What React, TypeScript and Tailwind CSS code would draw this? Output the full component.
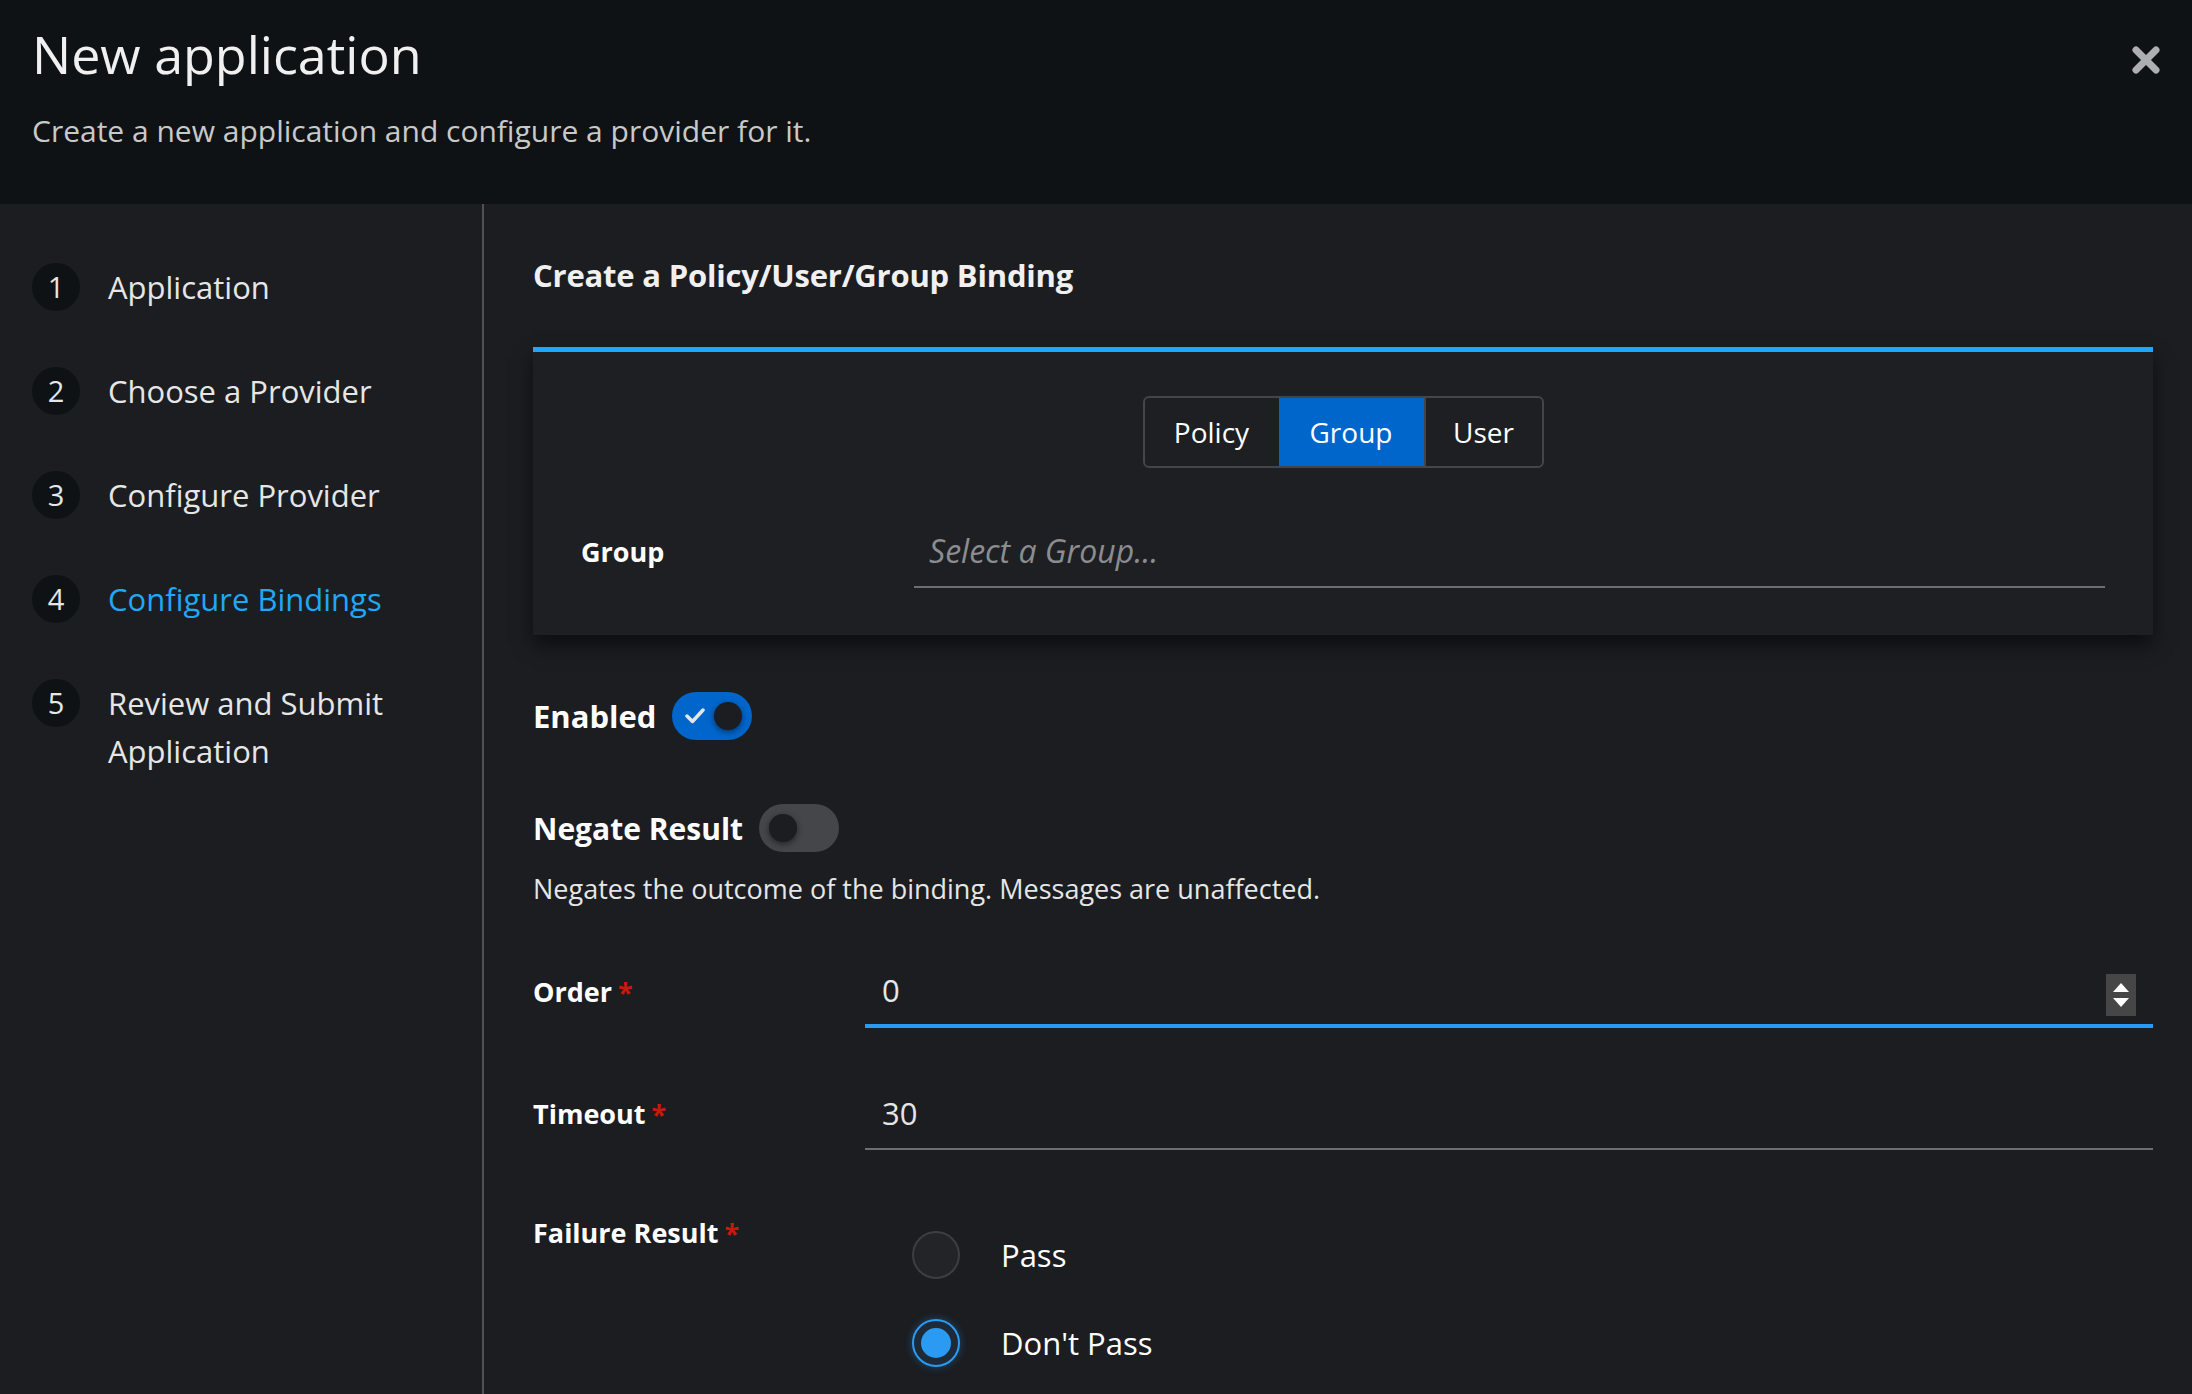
import React from "react";

function CloseIcon() {
  return (
    <svg width="30" height="30" viewBox="0 0 30 30">
      <line x1="5" y1="5" x2="25" y2="25" stroke="#aeafb1" strokeWidth="7" strokeLinecap="round" />
      <line x1="25" y1="5" x2="5" y2="25" stroke="#aeafb1" strokeWidth="7" strokeLinecap="round" />
    </svg>
  );
}

function Step({ n, label, active }: { n: number; label: string; active?: boolean }) {
  return (
    <div className="flex items-start gap-[28px]">
      <div className="w-[48px] h-[48px] shrink-0 rounded-full bg-[#0f1214] flex items-center justify-center text-[29px] text-[#e6e6e6]">
        {n}
      </div>
      <div
        className={
          "max-w-[300px] text-[31px] leading-[48px] " + (active ? "text-[#1fa7f8]" : "text-[#e6e6e6]")
        }
      >
        {label}
      </div>
    </div>
  );
}

function Switch({ on }: { on: boolean }) {
  return (
    <div
      className={
        "relative w-[80px] h-[48px] rounded-full shrink-0 " + (on ? "bg-[#0066cc]" : "bg-[#45464a]")
      }
    >
      {on && (
        <svg className="absolute left-[13px] top-[15px]" width="20" height="18" viewBox="0 0 20 18">
          <path d="M2 9 L7.5 14.5 L18 3" fill="none" stroke="#e6e6e6" strokeWidth="3.5" strokeLinecap="round" strokeLinejoin="round" />
        </svg>
      )}
      <div
        className={
          "absolute top-[10px] w-[28px] h-[28px] rounded-full bg-[#1b1d21] shadow-[0_2px_6px_rgba(0,0,0,0.5)] " +
          (on ? "left-[42px]" : "left-[10px]")
        }
      />
    </div>
  );
}

function Req() {
  return <span className="ml-[6px] text-[#c9190b]">*</span>;
}

export default function App() {
  return (
    <div className="h-[1394px] w-full overflow-hidden flex flex-col bg-[#1b1d21] font-['Open_Sans',sans-serif]">
      <header className="relative h-[204px] shrink-0 bg-[#0f1214] px-[32px] pt-[18px]">
        <h1 className="text-[52px] leading-[72px] font-normal text-[#f0f0f0]">New application</h1>
        <p className="mt-[17px] text-[30px] leading-[48px] text-[#c9c9c9]">
          Create a new application and configure a provider for it.
        </p>
        <button className="absolute right-[31px] top-[45px]">
          <CloseIcon />
        </button>
      </header>
      <div className="flex flex-1 min-h-0">
        <nav className="w-[484px] shrink-0 border-r-2 border-[#4f5255] pt-[59px] pl-[32px] flex flex-col gap-[56px]">
          <Step n={1} label="Application" />
          <Step n={2} label="Choose a Provider" />
          <Step n={3} label="Configure Provider" />
          <Step n={4} label="Configure Bindings" active />
          <Step n={5} label="Review and Submit Application" />
        </nav>
        <main className="flex-1 min-w-0 pl-[49px] pr-[39px] pt-[47px]">
          <h2 className="text-[31px] leading-[48px] font-bold text-[#f0f0f0] tracking-[-0.2px]">
            Create a Policy/User/Group Binding
          </h2>
          <section className="mt-[48px] h-[288px] border-t-[5px] border-[#1fa7f8] bg-[#1e1f23] shadow-[0_10px_18px_rgba(0,0,0,0.55)] px-[48px] pt-[44px]">
            <div className="flex justify-center">
              <div className="flex h-[72px] rounded-[6px] border-2 border-[#444548] overflow-hidden text-[28px] text-white">
                <div className="w-[134px] flex items-center justify-center">Policy</div>
                <div className="w-[145px] flex items-center justify-center bg-[#0066cc]">Group</div>
                <div className="w-[118px] flex items-center justify-center border-l-2 border-[#444548]">User</div>
              </div>
            </div>
            <div className="mt-[48px] grid grid-cols-[333px_1fr] items-center">
              <div className="text-[27px] font-bold text-white">Group</div>
              <div className="h-[72px] border-b-2 border-[#6a6e73] flex items-center pl-[15px] text-[32px] italic text-[#8b8d90]">
                Select a Group...
              </div>
            </div>
          </section>

          <div className="mt-[57px] flex items-center gap-[16px]">
            <span className="text-[31px] font-bold text-white">Enabled</span>
            <Switch on />
          </div>

          <div className="mt-[64px] flex items-center gap-[16px]">
            <span className="text-[30px] font-bold text-white">Negate Result</span>
            <Switch on={false} />
          </div>
          <p className="mt-[16px] text-[27px] leading-[42px] text-[#e6e6e6]">
            Negates the outcome of the binding. Messages are unaffected.
          </p>

          <div className="mt-[46px] grid grid-cols-[332px_1fr] items-center">
            <div className="text-[27px] font-bold text-white">
              Order
              <Req />
            </div>
            <div className="relative h-[72px] border-b-4 border-[#2b9af3] flex items-center pl-[17px] text-[31px] text-[#e6e6e6]">
              0
              <div className="absolute right-[17px] top-[18px] w-[30px] h-[42px] bg-[#464646] flex flex-col items-center justify-center gap-[6px]">
                <svg width="16" height="9" viewBox="0 0 16 9">
                  <path d="M8 0 L16 9 L0 9 Z" fill="#ffffff" />
                </svg>
                <svg width="16" height="9" viewBox="0 0 16 9">
                  <path d="M0 0 L16 0 L8 9 Z" fill="#ffffff" />
                </svg>
              </div>
            </div>
          </div>

          <div className="mt-[50px] grid grid-cols-[332px_1fr] items-center">
            <div className="text-[27px] font-bold text-white">
              Timeout
              <Req />
            </div>
            <div className="h-[72px] border-b-2 border-[#6a6e73] flex items-center pl-[17px] text-[31px] text-[#e6e6e6]">
              30
            </div>
          </div>

          <div className="mt-[62px] grid grid-cols-[332px_1fr] items-start">
            <div className="text-[27px] leading-[42px] font-bold text-white">
              Failure Result
              <Req />
            </div>
            <div className="pt-[19px] pl-[47px] flex flex-col gap-[40px]">
              <div className="flex items-center gap-[41px] h-[48px]">
                <div className="w-[48px] h-[48px] rounded-full bg-[#232427] border-2 border-[#3c3f42]" />
                <span className="text-[31px] font-medium text-white">Pass</span>
              </div>
              <div className="flex items-center gap-[41px] h-[48px]">
                <div className="w-[48px] h-[48px] rounded-full bg-[#1e2a38] border-2 border-[#2b9af3] flex items-center justify-center shadow-[0_0_8px_rgba(43,154,243,0.35)]">
                  <div className="w-[30px] h-[30px] rounded-full bg-[#2b9af3]" />
                </div>
                <span className="text-[31px] font-medium text-white">Don't Pass</span>
              </div>
            </div>
          </div>
        </main>
      </div>
    </div>
  );
}
